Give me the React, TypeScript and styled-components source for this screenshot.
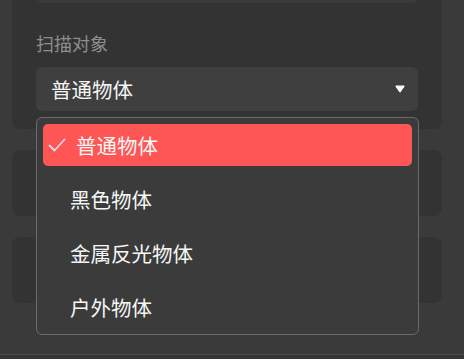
import styled, { createGlobalStyle } from 'styled-components';

const GlobalStyle = createGlobalStyle`
  html, body {
    margin: 0;
    padding: 0;
    background: #3a3a3a;
    font-family: "Noto Sans CJK SC", "Noto Sans", sans-serif;
  }
  body {
    height: 359px;
    overflow: hidden;
  }
`

const Page = styled.div`
  display: flex;
  flex-direction: column;
  gap: 21px;
  width: 430px;
  margin: -60px 0 0 12px;
`

const Card = styled.div<{ $height?: number }>`
  background: #333333;
  border-radius: 8px;
  height: ${(p) => (p.$height ? `${p.$height}px` : 'auto')};
  box-sizing: border-box;
`

const FormCard = styled(Card)`
  display: flex;
  flex-direction: column;
  padding: 23px 24px 18px;
`

const Input = styled.div`
  height: 40px;
  background: #3a3a3a;
  border-radius: 6px;
`

const Label = styled.div`
  margin-top: 28px;
  font-size: 18px;
  line-height: 24px;
  color: #8e8e8e;
`

const SelectWrap = styled.div`
  position: relative;
  margin-top: 12px;
`

const SelectBox = styled.div`
  display: flex;
  align-items: center;
  justify-content: space-between;
  height: 44px;
  padding: 0 13px 0 15px;
  background: #3f3f3f;
  border-radius: 6px;
  color: #f4f4f4;
  font-size: 20.5px;
`

const Caret = styled.svg`
  width: 10px;
  height: 8px;
`

const Menu = styled.ul`
  position: absolute;
  z-index: 10;
  top: calc(100% + 6px);
  left: 0;
  right: -1px;
  margin: 0;
  padding: 6px;
  list-style: none;
  display: flex;
  flex-direction: column;
  gap: 12px;
  background: #3b3b3b;
  border: 1px solid #6b6b6b;
  border-radius: 6px;
`

const Item = styled.li<{ $active?: boolean }>`
  display: flex;
  align-items: center;
  gap: 10px;
  height: 42px;
  padding-left: ${(p) => (p.$active ? '5px' : '27px')};
  border-radius: 5px;
  background: ${(p) => (p.$active ? '#fe5555' : 'transparent')};
  color: #f6f6f6;
  font-size: 20.5px;
`

const Check = styled.svg`
  width: 18px;
  height: 14px;
  flex-shrink: 0;
`

const Footer = styled.div`
  margin-top: 51px;
  border-top: 1px solid #4b4b4b;
  height: 10px;
  background: #363636;
`

const options = ['普通物体', '黑色物体', '金属反光物体', '户外物体'];

export default function App() {
  const selected = options[0];
  return (
    <>
      <GlobalStyle />
      <Page>
        <FormCard>
          <Input />
          <Label>扫描对象</Label>
          <SelectWrap>
            <SelectBox>
              {selected}
              <Caret viewBox="0 0 10 8">
                <path d="M1 1.2h8L5 6.8z" fill="#ffffff" stroke="#ffffff" strokeWidth="1.2" strokeLinejoin="round" />
              </Caret>
            </SelectBox>
            <Menu>
              {options.map((o) => (
                <Item key={o} $active={o === selected}>
                  {o === selected && (
                    <Check viewBox="0 0 18 14">
                      <path d="M1.5 7.5l5 5L16.5 1.5" fill="none" stroke="#e6d8ea" strokeWidth="1.8" strokeLinecap="round" strokeLinejoin="round" />
                    </Check>
                  )}
                  {o}
                </Item>
              ))}
            </Menu>
          </SelectWrap>
        </FormCard>
        <Card $height={66} />
        <Card $height={66} />
      </Page>
      <Footer />
    </>
  );
}
